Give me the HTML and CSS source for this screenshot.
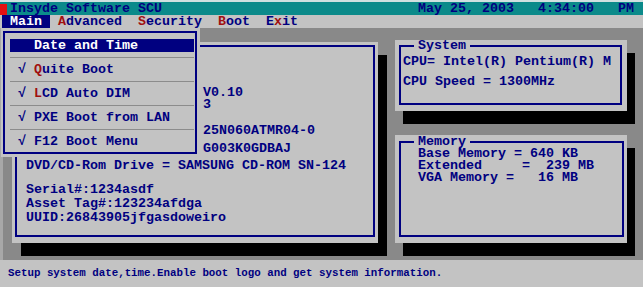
FILE: index.html
```html
<!DOCTYPE html>
<html lang="en">
<head>
    <meta charset="UTF-8">
    <title>Insyde Software SCU</title>
    <link rel="stylesheet" href="styles.css">
</head>
<body>
    <div class="screen">
        <div class="titlebar">
            <span class="mark"></span>
            <span class="app-name">Insyde Software SCU</span>
            <span class="clock">May 25, 2003   4:34:00   PM</span>
        </div>

        <div class="menubar">
            <span class="tab active">Main</span>
            <span class="tab"><span class="key">A</span>dvanced</span>
            <span class="tab"><span class="key">S</span>ecurity</span>
            <span class="tab"><span class="key">B</span>oot</span>
            <span class="tab">E<span class="key">x</span>it</span>
        </div>

        <div class="desk">
            <div class="main-panel">
                <div class="main-frame">
                    <!-- labels of these rows sit under the open menu -->
                    <div class="row value">V0.10</div>
                    <div class="row value">3</div>
                    <div class="row value mt-14">25N060ATMR04-0</div>
                    <div class="row value mt-6">G003K0GDBAJ</div>
                    <div class="row mt-5">DVD/CD-Rom Drive = SAMSUNG CD-ROM SN-124</div>
                    <div class="row tall mt-11">Serial#:1234asdf</div>
                    <div class="row tall">Asset Tag#:123234afdga</div>
                    <div class="row tall">UUID:26843905jfgasdoweiro</div>
                </div>
            </div>

            <div class="side">
                <div class="box system-box">
                    <fieldset>
                        <legend>System</legend>
                        <div class="sys-line">CPU= Intel(R) Pentium(R) M</div>
                        <div class="sys-line">CPU Speed = 1300MHz</div>
                    </fieldset>
                </div>
                <div class="box memory-box">
                    <fieldset>
                        <legend>Memory</legend>
                        <div class="mem-line">Base Memory = 640 KB</div>
                        <div class="mem-line">Extended     =  239 MB</div>
                        <div class="mem-line">VGA Memory =   16 MB</div>
                    </fieldset>
                </div>
            </div>
        </div>

        <div class="statusbar">Setup system date,time.Enable boot logo and get system information.</div>

        <!-- menu opened from "Main" -->
        <div class="popup">
            <div class="popup-frame">
                <div class="item"><span class="label selected"><span class="check"></span>Date and Time</span></div>
                <div class="item"><span class="label"><span class="check">√</span><span class="key">Q</span>uite Boot</span></div>
                <div class="item"><span class="label"><span class="check">√</span><span class="key">L</span>CD Auto DIM</span></div>
                <div class="item"><span class="label"><span class="check">√</span>PXE Boot from LAN</span></div>
                <div class="item last"><span class="label"><span class="check">√</span>F12 Boot Menu</span></div>
            </div>
        </div>
    </div>
</body>
</html>
```

FILE: styles.css
```css
/* BIOS setup screen */
body {
    margin: 0;
    background-color: #c3c3c3;
    color: #000080;
    font-family: "Liberation Mono", "DejaVu Sans Mono", monospace;
    font-weight: bold;
    font-size: 13.33px;
}
.screen {
    position: relative;
    width: 643px;
    height: 287px;
    overflow: hidden;
    display: flex;
    flex-direction: column;
}
.titlebar {
    height: 13px;
    border-top: 2px solid #cfe0e0;
    background-color: #0b8a8a;
    display: flex;
    align-items: center;
    line-height: 13px;
    white-space: pre;
}
.mark {
    width: 7px;
    height: 11px;
    margin-top: 2px;
    background-color: #e41010;
}
.app-name {
    margin-left: 3px;
}
.clock {
    margin-left: auto;
    margin-right: 9px;
}
.menubar {
    height: 13px;
    padding-left: 2px;
    display: flex;
    line-height: 13px;
    background-color: #c3c3c3;
}
.tab {
    padding: 0 8px;
}
.tab.active {
    background-color: #000080;
    color: #ffffff;
}
.key {
    color: #a01010;
}
.desk {
    flex-grow: 1;
    background-color: #898989;
    border-left: 3px solid #a8a8a8;
    display: flex;
    align-items: flex-start;
    gap: 17px;
    padding: 14px 0 0 9px;
}
.main-panel {
    width: 366px;
    height: 201px;
    box-sizing: border-box;
    padding: 3px 3px 6px;
    background-color: #c3c3c3;
    box-shadow: 9px 13px 0 #000000;
}
.main-frame {
    height: 100%;
    box-sizing: border-box;
    border: 2px solid #000080;
    padding: 40px 0 0 9px;
}
.row {
    height: 12px;
    line-height: 12px;
    white-space: pre;
}
.row.value {
    padding-left: 177px;
}
.row.tall {
    height: 14px;
    line-height: 14px;
}
.mt-14 { margin-top: 14px; }
.mt-11 { margin-top: 11px; }
.mt-6 { margin-top: 6px; }
.mt-5 { margin-top: 5px; }
.side {
    width: 232px;
    margin-top: -2px;
    display: flex;
    flex-direction: column;
    gap: 24px;
}
.box {
    box-sizing: border-box;
    background-color: #c3c3c3;
    box-shadow: 8px 13px 0 #000000;
}
.system-box {
    height: 71px;
    padding: 0 5px 6px 4px;
}
.memory-box {
    height: 108px;
    padding: 1px 3px 6px 4px;
}
fieldset {
    margin: 0;
    padding: 0;
    min-width: 0;
    height: 100%;
    box-sizing: border-box;
    border: 2px solid #000080;
}
legend {
    margin-left: 13px;
    padding: 0 4px;
    line-height: 12px;
}
.sys-line {
    padding-left: 2px;
    line-height: 20px;
    white-space: pre;
}
.mem-line {
    padding-left: 17px;
    line-height: 12px;
    white-space: pre;
}
.statusbar {
    height: 27px;
    padding-left: 8px;
    line-height: 27px;
    font-size: 10.8px;
    background-color: #c3c3c3;
}
.popup {
    position: absolute;
    left: 1px;
    top: 28px;
    width: 199px;
    box-sizing: border-box;
    padding: 3px 3px 3px 2px;
    background-color: #c3c3c3;
}
.popup-frame {
    border: 2px solid #000080;
    padding: 1px 1px 0 5px;
}
.item {
    height: 24px;
    box-sizing: border-box;
    display: flex;
    align-items: center;
    border-bottom: 1px solid #8c8c8c;
}
.item.last {
    height: 22px;
    border-bottom: none;
}
.label {
    flex-grow: 1;
    height: 13px;
    line-height: 13px;
    padding-left: 8px;
    display: flex;
    white-space: pre;
}
.label.selected {
    background-color: #000080;
    color: #ffffff;
}
.check {
    width: 16px;
}
```
